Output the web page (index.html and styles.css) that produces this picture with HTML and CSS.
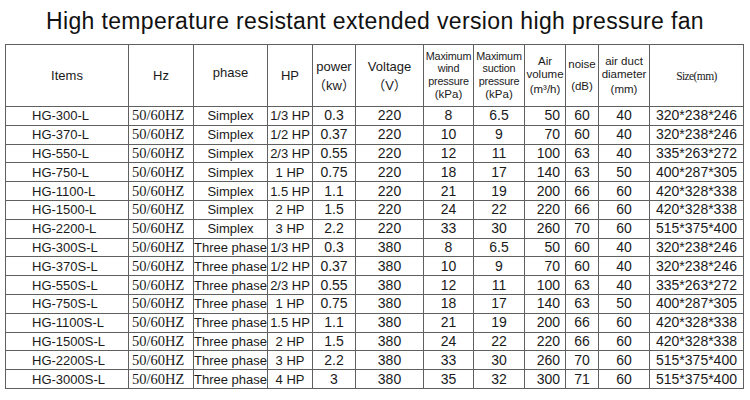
FILE: index.html
```html
<!DOCTYPE html>
<html>
<head>
<meta charset="utf-8">
<link rel="stylesheet" href="styles.css">
</head>
<body>
<h1 class="title">High temperature resistant extended version high pressure fan</h1>
<table class="spec">
<colgroup>
<col class="c-items"><col class="c-hz"><col class="c-phase"><col class="c-hp"><col class="c-power"><col class="c-volt"><col class="c-wind"><col class="c-suct"><col class="c-air"><col class="c-noise"><col class="c-duct"><col class="c-size">
</colgroup>
<thead>
<tr class="head">
<th>Items</th>
<th>Hz</th>
<th><span class="up">phase</span></th>
<th>HP</th>
<th class="two"><span class="l">power</span><span class="l">（kw）</span></th>
<th class="two volt"><span class="l">Voltage</span><span class="l">（V）</span></th>
<th class="small"><span class="s">Maximum</span><span class="s">wind</span><span class="s">pressure</span><span class="k">(kPa)</span></th>
<th class="small"><span class="s">Maximum</span><span class="s">suction</span><span class="s">pressure</span><span class="k">(kPa)</span></th>
<th class="mid"><span class="m">Air</span><span class="m">volume</span><span class="k2">(m³/h)</span></th>
<th class="mid"><span class="m">noise</span><span class="k3">(dB)</span></th>
<th class="mid"><span class="m">air duct</span><span class="m">diameter</span><span class="k2">(mm)</span></th>
<th class="serif-h">Size(mm)</th>
</tr>
</thead>
<tbody>
<tr><td class="item">HG-300-L</td><td class="hz">50/60HZ</td><td class="txt">Simplex</td><td class="txt">1/3 HP</td><td>0.3</td><td>220</td><td>8</td><td>6.5</td><td class="air">50</td><td>60</td><td>40</td><td>320*238*246</td></tr>
<tr><td class="item">HG-370-L</td><td class="hz">50/60HZ</td><td class="txt">Simplex</td><td class="txt">1/2 HP</td><td>0.37</td><td>220</td><td>10</td><td>9</td><td class="air">70</td><td>60</td><td>40</td><td>320*238*246</td></tr>
<tr><td class="item">HG-550-L</td><td class="hz">50/60HZ</td><td class="txt">Simplex</td><td class="txt">2/3 HP</td><td>0.55</td><td>220</td><td>12</td><td>11</td><td class="air">100</td><td>63</td><td>40</td><td>335*263*272</td></tr>
<tr><td class="item">HG-750-L</td><td class="hz">50/60HZ</td><td class="txt">Simplex</td><td class="txt">1 HP</td><td>0.75</td><td>220</td><td>18</td><td>17</td><td class="air">140</td><td>63</td><td>50</td><td>400*287*305</td></tr>
<tr><td class="item">HG-1100-L</td><td class="hz">50/60HZ</td><td class="txt">Simplex</td><td class="txt">1.5 HP</td><td>1.1</td><td>220</td><td>21</td><td>19</td><td class="air">200</td><td>66</td><td>60</td><td>420*328*338</td></tr>
<tr><td class="item">HG-1500-L</td><td class="hz">50/60HZ</td><td class="txt">Simplex</td><td class="txt">2 HP</td><td>1.5</td><td>220</td><td>24</td><td>22</td><td class="air">220</td><td>66</td><td>60</td><td>420*328*338</td></tr>
<tr><td class="item">HG-2200-L</td><td class="hz">50/60HZ</td><td class="txt">Simplex</td><td class="txt">3 HP</td><td>2.2</td><td>220</td><td>33</td><td>30</td><td class="air">260</td><td>70</td><td>60</td><td>515*375*400</td></tr>
<tr><td class="item">HG-300S-L</td><td class="hz">50/60HZ</td><td class="txt">Three phase</td><td class="txt">1/3 HP</td><td>0.3</td><td>380</td><td>8</td><td>6.5</td><td class="air">50</td><td>60</td><td>40</td><td>320*238*246</td></tr>
<tr><td class="item">HG-370S-L</td><td class="hz">50/60HZ</td><td class="txt">Three phase</td><td class="txt">1/2 HP</td><td>0.37</td><td>380</td><td>10</td><td>9</td><td class="air">70</td><td>60</td><td>40</td><td>320*238*246</td></tr>
<tr><td class="item">HG-550S-L</td><td class="hz">50/60HZ</td><td class="txt">Three phase</td><td class="txt">2/3 HP</td><td>0.55</td><td>380</td><td>12</td><td>11</td><td class="air">100</td><td>63</td><td>40</td><td>335*263*272</td></tr>
<tr><td class="item">HG-750S-L</td><td class="hz">50/60HZ</td><td class="txt">Three phase</td><td class="txt">1 HP</td><td>0.75</td><td>380</td><td>18</td><td>17</td><td class="air">140</td><td>63</td><td>50</td><td>400*287*305</td></tr>
<tr><td class="item">HG-1100S-L</td><td class="hz">50/60HZ</td><td class="txt">Three phase</td><td class="txt">1.5 HP</td><td>1.1</td><td>380</td><td>21</td><td>19</td><td class="air">200</td><td>66</td><td>60</td><td>420*328*338</td></tr>
<tr><td class="item">HG-1500S-L</td><td class="hz">50/60HZ</td><td class="txt">Three phase</td><td class="txt">2 HP</td><td>1.5</td><td>380</td><td>24</td><td>22</td><td class="air">220</td><td>66</td><td>60</td><td>420*328*338</td></tr>
<tr><td class="item">HG-2200S-L</td><td class="hz">50/60HZ</td><td class="txt">Three phase</td><td class="txt">3 HP</td><td>2.2</td><td>380</td><td>33</td><td>30</td><td class="air">260</td><td>70</td><td>60</td><td>515*375*400</td></tr>
<tr><td class="item">HG-3000S-L</td><td class="hz">50/60HZ</td><td class="txt">Three phase</td><td class="txt">4 HP</td><td>3</td><td>380</td><td>35</td><td>32</td><td class="air">300</td><td>71</td><td>60</td><td>515*375*400</td></tr>
</tbody>
</table>
</body>
</html>
```
FILE: styles.css
```css
html, body {
  margin: 0;
  padding: 0;
  background: #fff;
}
body {
  width: 750px;
  height: 400px;
  overflow: hidden;
  font-family: "Liberation Sans", Arial, "Noto Sans CJK SC", sans-serif;
  color: #1a1a1a;
}
.title {
  margin: 0;
  padding: 8px 0 0;
  height: 36px;
  font-size: 23px;
  font-weight: normal;
  line-height: 26px;
  letter-spacing: 0.35px;
  text-align: center;
  color: #111;
}
.spec {
  margin-left: 5px;
  width: 739px;
  table-layout: fixed;
  border-collapse: collapse;
  border: 1px solid #444;
}
.c-items { width: 123px; }
.c-hz { width: 65px; }
.c-phase { width: 74px; }
.c-hp { width: 45px; }
.c-power { width: 43px; }
.c-volt { width: 68px; }
.c-wind { width: 50px; }
.c-suct { width: 51px; }
.c-air { width: 41px; }
.c-noise { width: 33px; }
.c-duct { width: 51px; }
.c-size { width: 94px; }

.spec th, .spec td {
  border: 1px solid #606060;
  padding: 0;
  text-align: center;
  vertical-align: middle;
  white-space: nowrap;
  overflow: hidden;
}
.spec th {
  font-weight: normal;
  font-size: 13px;
}
.head { height: 62px; }
.spec tbody tr { height: 18.8px; }
.spec td {
  font-size: 14px;
  line-height: 15px;
}
.spec td.txt { font-size: 13px; }
.spec td.item {
  font-size: 13px;
  text-align: left;
  padding-left: 26px;
}
.spec td.hz {
  text-align: left;
  padding-left: 3px;
  font-family: "Liberation Serif", "Times New Roman", serif;
  font-size: 14.5px;
}
.spec td.air {
  text-align: right;
  padding-right: 5px;
}
.up {
  position: relative;
  top: -3px;
}
.l {
  display: block;
  line-height: 19px;
}
.two { font-size: 13px; }
.volt { font-size: 14px; }
.small .s {
  display: block;
  font-size: 10.8px;
  line-height: 12.1px;
  letter-spacing: -0.2px;
}
.small .k {
  display: block;
  font-size: 11.5px;
  line-height: 13px;
  margin-top: 1px;
}
.mid .m {
  display: block;
  font-size: 11.5px;
  line-height: 12.9px;
}
.mid .k2 {
  display: block;
  font-size: 11.5px;
  line-height: 13px;
  margin-top: 3px;
}
.mid .k3 {
  display: block;
  font-size: 11.5px;
  line-height: 13px;
  margin-top: 9px;
}
.serif-h {
  font-family: "Liberation Serif", "Times New Roman", serif;
  letter-spacing: -0.6px;
}
.spec th.serif-h { font-size: 11.5px; }
```
